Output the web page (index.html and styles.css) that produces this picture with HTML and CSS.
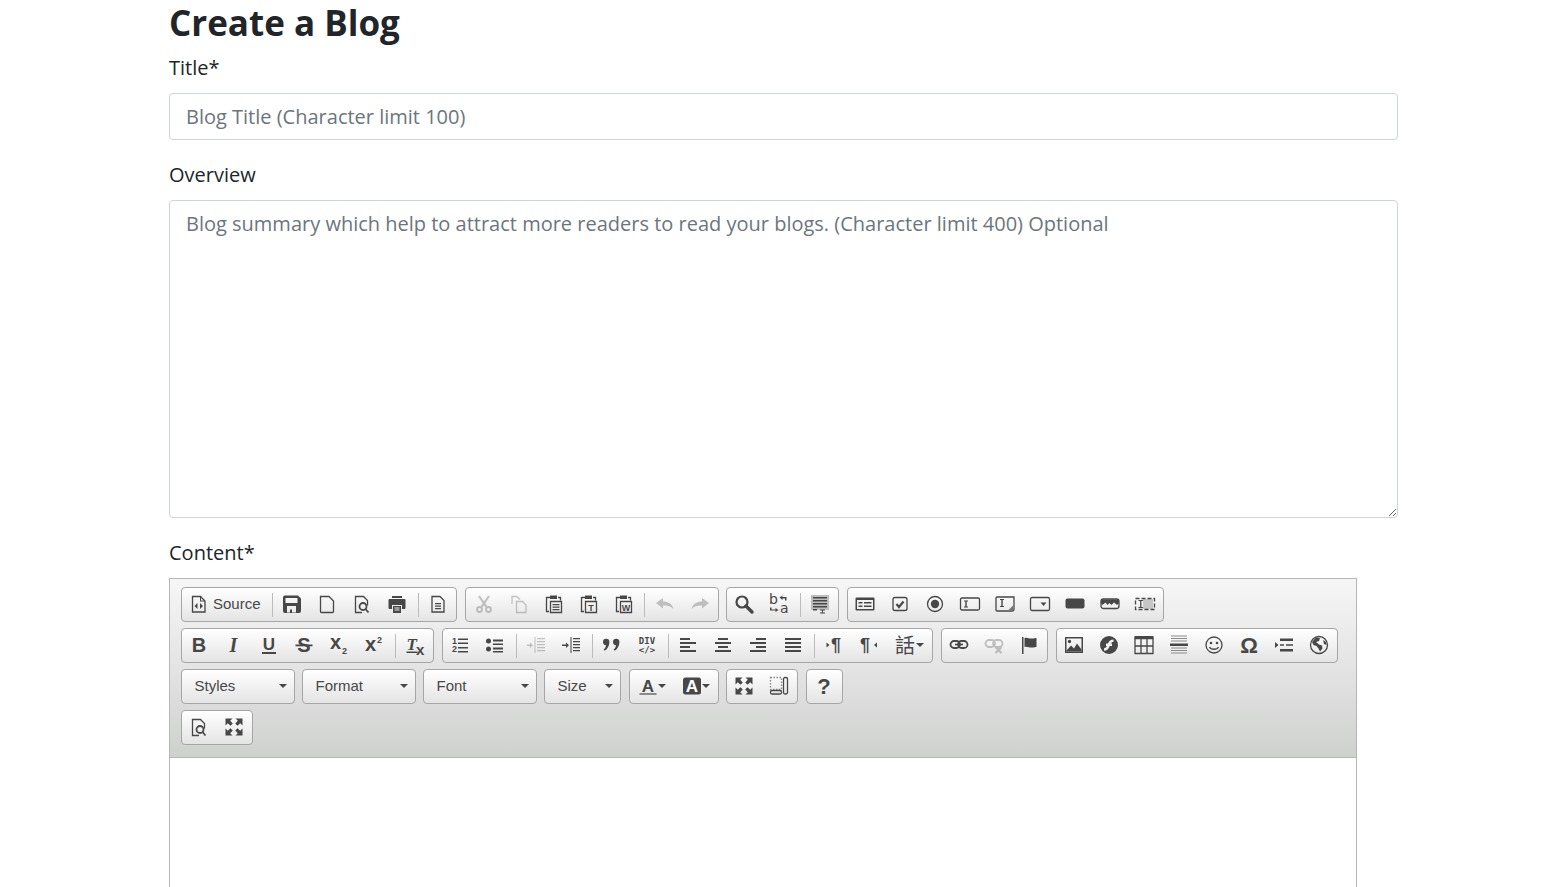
FILE: index.html
```html
<!doctype html>
<html lang="en">
<head>
    <meta charset="UTF-8">
    <title>Create a Blog</title>
    <link rel="stylesheet" href="styles.css">
</head>
<body>
<div class="page">
    <h1 class="page-title">Create a Blog</h1>

    <div class="field">
        <label class="field-label" for="title">Title*</label>
        <input class="field-input" id="title" type="text" placeholder="Blog Title (Character limit 100)">
    </div>

    <div class="field">
        <label class="field-label" for="overview">Overview</label>
        <textarea class="field-input field-area" id="overview" placeholder="Blog summary which help to attract more readers to read your blogs. (Character limit 400) Optional"></textarea>
    </div>

    <label class="field-label">Content*</label>
    <div class="editor">
        <div class="toolbar">
            <!-- row 1 -->
            <div class="tb-row tb-row-fine">
                <div class="tb-group">
                    <a class="tb-btn tb-source">
                        <svg class="ico" viewBox="0 0 20 20"><path class="ln" d="M3.500 2.500h8l4.500 4.500v11h-12.500z"/><path d="M11 2.500v5h5v-1h-4v-4zM5.500 12l3-3v6zM14 12l-3-3v6z"/></svg>
                        <span>Source</span>
                    </a>
                    <i class="tb-sep"></i>
                    <a class="tb-btn"><svg class="ico" viewBox="0 0 20 20"><path fill-rule="evenodd" d="M1 3.500a2 2 0 0 1 2-2h13l3 3v12.500a2 2 0 0 1-2 2h-14a2 2 0 0 1-2-2zM3.500 4v5h12v-5zM5 12v6.500h3v-3h2v3h4v-6.500z"/></svg></a>
                    <a class="tb-btn"><svg class="ico" viewBox="0 0 20 20"><path class="ln" d="M3.500 2.500h8.500l4.500 4.500v10.500a1 1 0 0 1-1 1h-11a1 1 0 0 1-1-1z"/></svg></a>
                    <a class="tb-btn"><svg class="ico" viewBox="0 0 20 20"><path class="ln" d="M10 18.500h-6.500v-16h8l4 4v5"/><circle class="ln2" cx="11" cy="12.500" r="3.500"/><path class="ln2" d="M13.500 15l3 3.500"/></svg></a>
                    <a class="tb-btn"><svg class="ico" viewBox="0 0 20 20"><path fill-rule="evenodd" d="M5 2h10v2h-10zM2.500 5h15a1 1 0 0 1 1 1v8a1 1 0 0 1-1 1h-2.500v-4h-10v4h-2.500a1 1 0 0 1-1-1v-8a1 1 0 0 1 1-1zM6 12h8v7h-8zM7.500 13.500v1h5v-1zM7.500 15.500v1h5v-1z"/></svg></a>
                    <i class="tb-sep"></i>
                    <a class="tb-btn"><svg class="ico" viewBox="0 0 20 20"><path class="ln" d="M4 2.500h8l4 4v11.500h-12z"/><path d="M7 9h6v1.300h-6zM7 11.500h6v1.300h-6zM7 14h6v1.300h-6z"/></svg></a>
                </div>
                <div class="tb-group tb-group-lead">
                    <a class="tb-btn is-off"><svg class="ico" viewBox="0 0 20 20"><path class="ln3" d="M5 2l7.500 11M15 2l-7.500 11"/><circle class="ln2" cx="5.500" cy="15.500" r="2.500"/><circle class="ln2" cx="14.500" cy="15.500" r="2.500"/></svg></a>
                    <a class="tb-btn is-off"><svg class="ico" viewBox="0 0 20 20"><path class="ln" d="M3 10v-7.500h5l3 3M7.500 7.500h6l3.500 3.500v7.500h-9.500z"/></svg></a>
                    <a class="tb-btn"><svg class="ico" viewBox="0 0 20 20"><path class="ln" d="M6 3.500h-3.500v14h2.500"/><path class="ln" d="M14 3.500h2.500v3"/><path d="M6 1.500h7v3.500h-7z"/><path class="ln" d="M6.500 7.500h11v11h-11z"/><path d="M8.500 10h7v1.300h-7zM8.500 12.500h7v1.300h-7zM8.500 15h7v1.300h-7z"/></svg></a>
                    <a class="tb-btn"><svg class="ico" viewBox="0 0 20 20"><path class="ln" d="M6 3.500h-3.500v14h2.500"/><path class="ln" d="M14 3.500h2.500v3"/><path d="M6 1.500h7v3.500h-7z"/><path class="ln" d="M6.500 7.500h11v11h-11z"/><text class="gl-sm" x="12" y="16.500" text-anchor="middle">T</text></svg></a>
                    <a class="tb-btn"><svg class="ico" viewBox="0 0 20 20"><path class="ln" d="M6 3.500h-3.500v14h2.500"/><path class="ln" d="M14 3.500h2.500v3"/><path d="M6 1.500h7v3.500h-7z"/><path class="ln" d="M6.500 7.500h11v11h-11z"/><text class="gl-sm" x="12" y="16.500" text-anchor="middle">W</text></svg></a>
                    <i class="tb-sep"></i>
                    <a class="tb-btn is-off"><svg class="ico" viewBox="0 0 20 20"><path d="M1 9l7-5v3.500c5 0 9 2 10.500 7.500-3-3-6-3.500-10.500-3.500v3z"/></svg></a>
                    <a class="tb-btn is-off"><svg class="ico" viewBox="0 0 20 20"><path d="M19 9l-7-5v3.500c-5 0-9 2-10.500 7.500 3-3 6-3.500 10.500-3.500v3z"/></svg></a>
                </div>
                <div class="tb-group">
                    <a class="tb-btn"><svg class="ico" viewBox="0 0 20 20"><circle class="ln3" cx="8" cy="8" r="5.500"/><path class="ln4" d="M12 12l6 6"/></svg></a>
                    <a class="tb-btn"><svg class="ico" viewBox="0 0 20 20"><text class="gl-rp" x="0" y="10">b</text><text class="gl-rp" x="11" y="19">a</text><path d="M10.500 3.500l3-2v1.500h4v3.500h-1.500v-2h-2.500v1.500zM1 13.500h1.500v2h4v-1.500l3 2-3 2v-1.500h-5.500z"/></svg></a>
                    <i class="tb-sep"></i>
                    <a class="tb-btn"><svg class="ico" viewBox="0 0 20 20"><path fill="#bdbdbd" d="M1 1h18v15h-18z"/><path d="M3 3h14v1.500h-14zM3 6h14v1.500h-14zM3 9h14v1.500h-14zM3 12h14v1.500h-14zM3 15h4v1.500h-4zM10 15.500h5v1h-2v2h2v1h-5v-1h2v-2h-2z"/></svg></a>
                </div>
                <div class="tb-group">
                    <a class="tb-btn"><svg class="ico" viewBox="0 0 20 20"><path fill-rule="evenodd" d="M1.500 3.500h17a1 1 0 0 1 1 1v11a1 1 0 0 1-1 1h-17a1 1 0 0 1-1-1v-11a1 1 0 0 1 1-1zM2 6v9h16v-9zM3.500 8h4v1.500h-4zM3.500 11.500h4v1.500h-4zM9 8h7.500v1.500h-7.500zM9 11.500h7.500v1.500h-7.500z"/></svg></a>
                    <a class="tb-btn"><svg class="ico" viewBox="0 0 20 20"><rect class="ln" x="3" y="3.500" width="14" height="13" rx="2"/><path class="ln3" d="M6.500 10l2.500 3 4.500-5.500"/></svg></a>
                    <a class="tb-btn"><svg class="ico" viewBox="0 0 20 20"><circle class="ln" cx="10" cy="10" r="7.500"/><circle cx="10" cy="10" r="4.200"/></svg></a>
                    <a class="tb-btn"><svg class="ico" viewBox="0 0 20 20"><rect class="ln" x="0.500" y="4" width="19" height="12" rx="1.500"/><path d="M4 6.500h4v1h-1.300v5h1.300v1h-4v-1h1.300v-5h-1.300z"/></svg></a>
                    <a class="tb-btn"><svg class="ico" viewBox="0 0 20 20"><path class="ln" d="M2 3h17v12a2 2 0 0 1-2 2h-15a1 1 0 0 1-1-1v-12a1 1 0 0 1 1-1z"/><path d="M5 5h4v1h-1.300v6h1.300v1h-4v-1h1.300v-6h-1.300z"/><path fill="#777" d="M18.500 11v5.500h-5.500z"/></svg></a>
                    <a class="tb-btn"><svg class="ico" viewBox="0 0 20 20"><rect class="ln" x="0.500" y="3.500" width="19" height="13" rx="1.500"/><path d="M10.500 8.500h6l-3 3.500z"/></svg></a>
                    <a class="tb-btn"><svg class="ico" viewBox="0 0 20 20"><rect x="0.500" y="4.500" width="19" height="10" rx="2"/></svg></a>
                    <a class="tb-btn"><svg class="ico" viewBox="0 0 20 20"><rect class="ln" x="1" y="5" width="18" height="9.500" rx="2.500"/><path d="M1 5.500h18v3.500l-2 2-3-2.500-2.500 2.500-2-2-2 2-2-2.500-3 2.500-1.500-2z"/></svg></a>
                    <a class="tb-btn"><svg class="ico" viewBox="0 0 20 20"><path fill="#c6c6c6" d="M8 5h10v10h-10z"/><path class="ln dash" d="M0.500 4.500h19v11h-19z"/><path d="M3.500 6h4.500v1h-1.600v6h1.600v1h-4.500v-1h1.600v-6h-1.600z"/></svg></a>
                </div>
            </div>
            <!-- row 2 -->
            <div class="tb-row">
                <div class="tb-group">
                    <a class="tb-btn"><svg class="ico" viewBox="0 0 20 20"><text class="gl" x="10" y="17" text-anchor="middle">B</text></svg></a>
                    <a class="tb-btn"><svg class="ico" viewBox="0 0 20 20"><text class="gl gl-i" x="9.500" y="17" text-anchor="middle">I</text></svg></a>
                    <a class="tb-btn"><svg class="ico" viewBox="0 0 20 20"><text class="gl gl-md" x="10" y="14.500" text-anchor="middle">U</text><path d="M3 17h14v2h-14z"/></svg></a>
                    <a class="tb-btn"><svg class="ico" viewBox="0 0 20 20"><text class="gl" x="10" y="17" text-anchor="middle">S</text><path d="M1.500 9.500h17v1.800h-17z"/></svg></a>
                    <a class="tb-btn"><svg class="ico" viewBox="0 0 20 20"><text class="gl gl-x" x="1" y="14">x</text><text class="gl-xs" x="13" y="18.500">2</text></svg></a>
                    <a class="tb-btn"><svg class="ico" viewBox="0 0 20 20"><text class="gl gl-x" x="1" y="16">x</text><text class="gl-xs" x="13" y="8">2</text></svg></a>
                    <i class="tb-sep"></i>
                    <a class="tb-btn"><svg class="ico" viewBox="0 0 20 20"><text class="gl gl-i gl-md" x="1.500" y="14.500">T</text><path d="M1.500 16.500h11v1.500h-11z"/><text class="gl gl-xm" x="11" y="19.500">x</text></svg></a>
                </div>
                <div class="tb-group">
                    <a class="tb-btn"><svg class="ico" viewBox="0 0 20 20"><text class="gl-xs" x="2" y="8.500">1</text><text class="gl-xs" x="2" y="17">2</text><path d="M8 3.500h10v1.500h-10zM8 7.500h10v1.500h-10zM8 12h10v1.500h-10zM8 16h10v1.500h-10z"/></svg></a>
                    <a class="tb-btn"><svg class="ico" viewBox="0 0 20 20"><circle cx="3.500" cy="6" r="2.500"/><circle cx="3.500" cy="14" r="2.500"/><path d="M8 4.500h10v2h-10zM8 8.500h10v1.500h-10zM8 12.500h10v2h-10zM8 16h10v1.500h-10z"/></svg></a>
                    <i class="tb-sep"></i>
                    <a class="tb-btn is-off"><svg class="ico" viewBox="0 0 20 20"><path d="M8.500 2h1v16h-1zM11 3h8v1.300h-8zM11 6h8v1.300h-8zM11 9h8v1.300h-8zM11 12h8v1.300h-8zM11 15h8v1.300h-8zM1 9.500h3v-2l3 2.700-3 2.700v-2h-3z"/></svg></a>
                    <a class="tb-btn"><svg class="ico" viewBox="0 0 20 20"><path d="M9.500 2h1v16h-1zM12 3h7v1.300h-7zM12 6h7v1.300h-7zM12 9h7v1.300h-7zM12 12h7v1.300h-7zM12 15h7v1.300h-7zM1 9.500h4v-2l3 2.700-3 2.700v-2h-4z"/></svg></a>
                    <i class="tb-sep"></i>
                    <a class="tb-btn"><svg class="ico" viewBox="0 0 20 20"><path d="M1 7a3.200 3.200 0 1 1 6.400 0c0 3.600-1.800 7-4.700 8.800l-1.100-1.200c1.400-1.100 2.200-2.500 2.400-4.400a3.200 3.200 0 0 1-3-3.200zM11 7a3.200 3.200 0 1 1 6.400 0c0 3.600-1.800 7-4.700 8.800l-1.100-1.200c1.400-1.100 2.200-2.500 2.400-4.400a3.200 3.200 0 0 1-3-3.200z"/></svg></a>
                    <a class="tb-btn"><svg class="ico" viewBox="0 0 20 20"><text class="gl-div" x="10" y="8.500" text-anchor="middle">DIV</text><text class="gl-div" x="10" y="18" text-anchor="middle">&lt;/&gt;</text></svg></a>
                    <i class="tb-sep"></i>
                    <a class="tb-btn"><svg class="ico" viewBox="0 0 20 20"><path d="M2 3h10v2h-10zM2 7h16v2h-16zM2 11h10v2h-10zM2 15h16v2h-16z"/></svg></a>
                    <a class="tb-btn"><svg class="ico" viewBox="0 0 20 20"><path d="M5 3h10v2h-10zM2 7h16v2h-16zM5 11h10v2h-10zM2 15h16v2h-16z"/></svg></a>
                    <a class="tb-btn"><svg class="ico" viewBox="0 0 20 20"><path d="M8 3h10v2h-10zM2 7h16v2h-16zM8 11h10v2h-10zM2 15h16v2h-16z"/></svg></a>
                    <a class="tb-btn"><svg class="ico" viewBox="0 0 20 20"><path d="M2 3h16v2h-16zM2 7h16v2h-16zM2 11h16v2h-16zM2 15h16v2h-16z"/></svg></a>
                    <i class="tb-sep"></i>
                    <a class="tb-btn"><svg class="ico" viewBox="0 0 20 20"><text class="gl-para" x="7" y="16">¶</text><path d="M2.500 7.500l3 2.500-3 2.500z"/></svg></a>
                    <a class="tb-btn"><svg class="ico" viewBox="0 0 20 20"><text class="gl-para" x="1" y="16">¶</text><path d="M18 7.500l-3 2.500 3 2.500z"/></svg></a>
                    <a class="tb-btn tb-lang"><span class="tb-han">話</span><i class="tb-caret"></i></a>
                </div>
                <div class="tb-group">
                    <a class="tb-btn"><svg class="ico" viewBox="0 0 20 20"><rect class="ln2" x="1.500" y="6" width="9.500" height="7" rx="3.500"/><rect class="ln2" x="9" y="6" width="9.500" height="7" rx="3.500"/><path d="M6 8.700h8v1.600h-8z"/></svg></a>
                    <a class="tb-btn is-off"><svg class="ico" viewBox="0 0 20 20"><rect class="ln2" x="1.500" y="5" width="9.500" height="7" rx="3.500"/><rect class="ln2" x="9" y="5" width="9.500" height="7" rx="3.500"/><path class="ln3" d="M11.500 12l6 6M17.500 12l-6 6"/></svg></a>
                    <a class="tb-btn"><svg class="ico" viewBox="0 0 20 20"><path d="M3 2h1.500v17h-1.500zM5.500 3c3-1 4.500 1 8 .5 1.500 0 3-.5 4-.5v9c-1 0-2.500.5-4 .5-3.500.5-5-1.500-8-.5z"/></svg></a>
                </div>
                <div class="tb-group">
                    <a class="tb-btn"><svg class="ico" viewBox="0 0 20 20"><path fill-rule="evenodd" d="M1 2h18v16h-18zM2.500 3.500v13h15v-13z"/><path d="M2.500 15.500l4.500-5 3 3 3-5 4.500 6v2h-15z"/><circle cx="5.500" cy="6.500" r="1.700"/></svg></a>
                    <a class="tb-btn"><svg class="ico" viewBox="0 0 20 20"><path fill-rule="evenodd" d="M10 1a9 9 0 1 1 0 18 9 9 0 0 1 0-18zM14.500 4.500c-3 0-4.500 1.500-5.500 4h-2v2.500h1c-.7 1.300-1.500 2-3 2.300v2.500c3 0 4.700-2 5.700-4.800h2.300v-2.500h-1.300c.5-.9 1.400-1.500 2.800-1.500z"/></svg></a>
                    <a class="tb-btn"><svg class="ico" viewBox="0 0 20 20"><path d="M0.500 1h19v3h-19z"/><path class="ln" d="M1 3.500h18v15h-18zM7 4v14M13 4v14M1 11h18"/></svg></a>
                    <a class="tb-btn"><svg class="ico" viewBox="0 0 20 20"><path d="M1 8.500h18v2.500h-18z"/><path fill="#8a8a8a" d="M2 0.500h16v1h-16zM2 3h16v1h-16zM2 5.500h16v1h-16zM2 12.500h16v1h-16zM2 15h16v1h-16zM2 17.500h16v1h-16z"/></svg></a>
                    <a class="tb-btn"><svg class="ico" viewBox="0 0 20 20"><circle class="ln" cx="10" cy="10" r="8"/><circle cx="7" cy="8" r="1.300"/><circle cx="13" cy="8" r="1.300"/><path class="ln" d="M5.500 12c1.500 3 7.500 3 9 0"/></svg></a>
                    <a class="tb-btn"><svg class="ico" viewBox="0 0 20 20"><text class="gl-omega" x="10" y="18" text-anchor="middle">Ω</text></svg></a>
                    <a class="tb-btn"><svg class="ico" viewBox="0 0 20 20"><path d="M6 3.500h13v2.500h-13zM1 7l3.500 3-3.500 3zM6 9.300h4v1.400h-4zM12 9.300h7v1.400h-7zM6 14h13v2.500h-13z"/></svg></a>
                    <a class="tb-btn"><svg class="ico" viewBox="0 0 20 20"><circle class="ln" cx="10" cy="10" r="8.500"/><path d="M3 7l4-4.500 4 .5-1 3-3 1 3 2.500 3 1 .5 3-2.500 3-1.500-3-2-2.500-3-1zM14 5l3 2 .5 3-2.500-1z"/></svg></a>
                </div>
            </div>
            <!-- row 3 -->
            <div class="tb-row tb-row-fine">
                <a class="tb-group tb-combo tb-combo-l"><span>Styles</span><i class="tb-caret"></i></a>
                <a class="tb-group tb-combo tb-combo-l"><span>Format</span><i class="tb-caret"></i></a>
                <a class="tb-group tb-combo tb-combo-l"><span>Font</span><i class="tb-caret"></i></a>
                <a class="tb-group tb-combo tb-combo-s"><span>Size</span><i class="tb-caret"></i></a>
                <div class="tb-group">
                    <a class="tb-btn tb-color"><svg class="ico" viewBox="0 0 20 20"><text class="gl gl-md" x="10" y="15.500" text-anchor="middle">A</text><path fill="#8a8a8a" d="M1.500 17h17v2h-17z"/></svg><i class="tb-caret"></i></a>
                    <a class="tb-btn tb-color"><svg class="ico" viewBox="0 0 20 20"><rect x="1" y="1.500" width="18" height="17" rx="2.500"/><text class="gl gl-md gl-rev" x="10" y="15.500" text-anchor="middle">A</text></svg><i class="tb-caret"></i></a>
                </div>
                <div class="tb-group">
                    <a class="tb-btn"><svg class="ico" viewBox="0 0 20 20"><path d="M1.500 1.500h7l-2.300 2.300 2.600 2.600-2.400 2.400-2.600-2.600-2.300 2.300zM18.500 1.500v7l-2.300-2.300-2.600 2.600-2.400-2.400 2.600-2.600-2.300-2.300zM1.500 18.500v-7l2.300 2.300 2.600-2.600 2.400 2.400-2.600 2.600 2.300 2.300zM18.500 18.500h-7l2.300-2.300-2.600-2.600 2.400-2.400 2.600 2.600 2.300-2.300z"/></svg></a>
                    <a class="tb-btn"><svg class="ico" viewBox="0 0 20 20"><path class="ln dot" d="M1.500 1.500h11v12h-11z"/><rect class="ln" x="14.500" y="1.500" width="4" height="16.500" rx="1.500"/><rect class="ln" x="1.500" y="14.500" width="11" height="3.500" rx="1.500"/></svg></a>
                </div>
                <div class="tb-group">
                    <a class="tb-btn"><svg class="ico" viewBox="0 0 20 20"><text class="gl gl-help" x="10" y="17.500" text-anchor="middle">?</text></svg></a>
                </div>
            </div>
            <!-- row 4 -->
            <div class="tb-row">
                <div class="tb-group">
                    <a class="tb-btn"><svg class="ico" viewBox="0 0 20 20"><path class="ln" d="M10 18.500h-6.500v-16h8l4 4v5"/><circle class="ln2" cx="11" cy="12.500" r="3.500"/><path class="ln2" d="M13.500 15l3 3.500"/></svg></a>
                    <a class="tb-btn"><svg class="ico" viewBox="0 0 20 20"><path d="M1.500 1.500h7l-2.300 2.300 2.600 2.600-2.400 2.400-2.600-2.600-2.300 2.300zM18.500 1.500v7l-2.300-2.300-2.600 2.600-2.400-2.400 2.600-2.600-2.300-2.300zM1.500 18.500v-7l2.300 2.300 2.600-2.600 2.400 2.400-2.600 2.600 2.300 2.300zM18.500 18.500h-7l2.300-2.300-2.600-2.600 2.400-2.400 2.600 2.600 2.300-2.300z"/></svg></a>
                </div>
            </div>
        </div>
        <div class="editor-body"></div>
    </div>
</div>
</body>
</html>
```

FILE: styles.css
```css
html,body{margin:0;padding:0;height:100%;overflow:hidden;background:#fff;}
body{font-family:"Open Sans","Noto Sans",sans-serif;font-size:20px;line-height:30px;color:#212529;}
.page{width:1229px;margin-left:169px;padding-top:2px;}
.page-title{margin:0 0 9px;font-size:35px;line-height:42px;font-weight:700;}
.field{margin-bottom:20px;}
.field-label{display:block;margin-bottom:10px;}
.field-input{display:block;box-sizing:border-box;width:100%;height:47px;padding:8px 16px;border:1px solid #ced4da;border-radius:4px;
font-family:inherit;font-size:20px;line-height:30px;color:#495057;background:#fff;outline:none;}
.field-input::placeholder{color:#6c757d;opacity:1;}
.field-area{height:318px;resize:vertical;}

/* editor */
.editor{width:1188px;box-sizing:border-box;border:1px solid #b6b6b6;border-bottom:0;}
.toolbar{padding:8px 0 12px 11px;display:flex;flex-direction:column;gap:6px;border-bottom:1px solid #b6b6b6;
background:linear-gradient(to bottom,#f6f6f6,#cfd1cf);}
.tb-row{display:flex;gap:8px;align-items:stretch;}
.tb-row-fine{gap:7.5px;}
.tb-group{display:flex;align-items:center;box-sizing:border-box;height:35px;border:1px solid #a6a6a6;border-radius:4px;
background:linear-gradient(to bottom,#fff,#e4e4e4);}
.tb-group-lead{padding-left:1px;}
.tb-btn{display:flex;align-items:center;justify-content:center;box-sizing:border-box;width:35px;height:33px;padding:0 1px 2px 0;flex:none;}
.tb-btn.is-off .ico{opacity:.3;}
.tb-sep{display:block;width:1px;height:24px;margin:0 2.500px;background:#bcbcbc;flex:none;}
.tb-source{width:87px;justify-content:flex-start;padding-left:7px;gap:4px;}
.tb-source span,.tb-combo span{font-family:"Liberation Sans",Arial,sans-serif;font-size:15px;line-height:20px;color:#484848;}
.tb-lang{width:45px;justify-content:flex-start;padding-left:8px;gap:1px;}
.tb-han{font-family:"Noto Sans CJK TC","Noto Sans CJK SC",sans-serif;font-size:20px;line-height:24px;color:#474747;}
.tb-caret{display:block;width:0;height:0;flex:none;border:4px solid transparent;border-top-color:#474747;border-bottom:0;}
.tb-combo{justify-content:space-between;padding:0 7px 2px 12.500px;}
.tb-combo-l{width:113.500px;}
.tb-combo-s{width:77px;}
.tb-color{width:44px;justify-content:flex-start;padding-left:8.500px;}

/* icons */
.ico{display:block;width:20px;height:20px;flex:none;fill:#474747;overflow:visible;}
.ln{fill:none;stroke:#474747;stroke-width:1.300;}
.ln2{fill:none;stroke:#474747;stroke-width:1.800;}
.ln3{fill:none;stroke:#474747;stroke-width:2.200;}
.ln4{fill:none;stroke:#474747;stroke-width:3.400;stroke-linecap:round;}
.dash{stroke-dasharray:4 2;}
.dot{stroke-dasharray:1.500 1.500;stroke:#888;}
.gl{font:700 20px "Liberation Sans",sans-serif;}
.gl-i{font-style:italic;font-family:"Liberation Serif",serif;}
.gl-md{font-size:17px;}
.gl-x{font-size:20px;}
.gl-xm{font-size:15px;}
.gl-rev{fill:#fff;}
.gl-help{font-size:22px;}
.gl-xs{font:700 9px "Liberation Sans",sans-serif;}
.gl-sm{font:700 9px "Liberation Sans",sans-serif;}
.gl-rp{font:400 14px "DejaVu Sans",sans-serif;}
.gl-div{font:700 9px "DejaVu Sans Mono",monospace;}
.gl-para{font:700 18px "Liberation Sans",sans-serif;}
.gl-omega{font:700 22px "Liberation Sans",sans-serif;}
.editor-body{height:130px;background:#fff;}
```
